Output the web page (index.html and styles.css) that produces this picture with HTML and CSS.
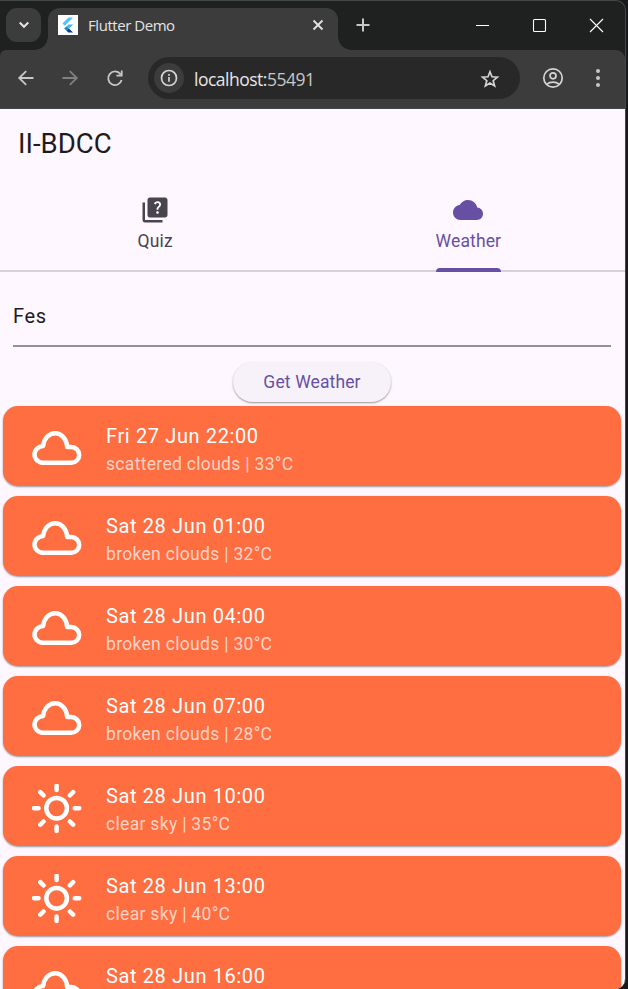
FILE: index.html
```html
<!DOCTYPE html>
<html lang="en">
<head>
<meta charset="utf-8">
<title>Flutter Demo</title>
<link rel="stylesheet" href="styles.css">
</head>
<body>
<svg class="defs" width="0" height="0" aria-hidden="true">
  <symbol id="cloud" viewBox="0 0 50 50"><path d="M11.500 38.800H39.300a7.900 7.900 0 0 0 0-15.800H35.200C34.700 15.200 29.700 9.200 23.300 9.200S11.900 14.600 11.200 21.900C6.400 22.200 2.500 26.100 2.500 30.500S6.400 38.800 11.500 38.800Z"/></symbol>
  <symbol id="sun" viewBox="0 0 50 50"><circle cx="24.600" cy="24.200" r="10.300"/><path d="M24.600 1.500v4.600M24.600 42.500v4.600M1.900 24.200h4.600M42.700 24.200h4.600M8.300 8.200l3.200 3.200M37.900 37.500l3.200 3.200M8.300 40.700l3.200-3.200M37.900 11.400l3.200-3.200"/></symbol>
</svg>
<div class="window">
  <div class="tabstrip">
    <button class="tab-search"><svg width="18" height="18" viewBox="0 0 18 18"><path d="m4.700 6.500 4.300 4.300 4.300-4.300"/></svg></button>
    <div class="browser-tab">
      <svg class="favicon" width="20" height="20" viewBox="0 0 20 20"><path fill="#fff" d="M0 0h20v20H0z"/><path fill="#54c5f8" d="M10.500 2.500h4.700L6.800 10.800 4.500 8.500z"/><path fill="#42b8f3" d="M10.600 9.500h4.600l-4.100 4-2.400-2.300z"/><path fill="#168bd0" d="m8.500 11.200 2.400 2.300-2.400 2.200L6.200 13.500z"/><path fill="#07418b" d="m8.500 15.700 2.400-2.200 4.200 4h-4.700z"/></svg>
      <span class="tab-title">Flutter Demo</span>
      <svg class="tab-close" width="14" height="14" viewBox="0 0 14 14"><path d="m2.500 2.500 9 9m0-9-9 9"/></svg>
    </div>
    <svg class="new-tab" width="16" height="16" viewBox="0 0 16 16"><path d="M8 1.500v13M1.500 8h13"/></svg>
    <div class="window-controls">
      <svg width="15" height="15" viewBox="0 0 15 15"><path d="M1 7.500h13"/></svg>
      <svg width="15" height="15" viewBox="0 0 15 15"><rect x="1.500" y="1.500" width="12" height="12" rx="1"/></svg>
      <svg width="15" height="15" viewBox="0 0 15 15"><path d="m1 1 13 13M14 1 1 14"/></svg>
    </div>
  </div>
  <div class="toolbar">
    <svg class="nav" width="20" height="20" viewBox="0 0 20 20"><path d="M17.500 10H3.200m7-6.800L3.200 10l7 6.800"/></svg>
    <svg class="nav disabled" width="20" height="20" viewBox="0 0 20 20"><path d="M2.500 10h14.300m-7-6.800 7 6.800-7 6.800"/></svg>
    <svg class="nav" width="20" height="20" viewBox="0 0 20 20"><path d="M15.500 6.200A6.800 6.800 0 1 0 16.600 12M16.700 2.500v5.200h-5.300"/></svg>
    <div class="address">
      <span class="site-info"><svg width="18" height="18" viewBox="0 0 18 18"><circle cx="9" cy="9" r="7.500"/><path d="M9 8v4.800M9 5v1.800"/></svg></span>
      <span class="url">localhost:<span class="port">55491</span></span>
      <svg class="star" width="20" height="20" viewBox="0 0 20 20"><path d="m10 2.800 2 5 5.400.4-4.200 3.500 1.400 5.200-4.600-2.900-4.600 2.900 1.400-5.200-4.200-3.500 5.400-.4z"/></svg>
    </div>
    <svg class="profile" width="22" height="22" viewBox="0 0 22 22"><circle cx="11" cy="11" r="9.200"/><circle cx="11" cy="8.800" r="3"/><path d="M4.700 17.300c3.500-3 9.100-3 12.600 0"/></svg>
    <svg class="more" width="6" height="20" viewBox="0 0 6 20"><circle cx="3" cy="3" r="2"/><circle cx="3" cy="10" r="2"/><circle cx="3" cy="17" r="2"/></svg>
  </div>
  <main class="app">
    <h1>II-BDCC</h1>
    <nav class="tabs">
      <div class="tab"><svg width="30" height="30" viewBox="0 0 24 24"><path d="M4 6H2v14c0 1.100.9 2 2 2h14v-2H4zM20 2H8c-1.100 0-2 .9-2 2v12c0 1.100.9 2 2 2h12c1.100 0 2-.9 2-2V4c0-1.100-.9-2-2-2zm-5.990 13c-.59 0-1.050-.47-1.050-1.050 0-.59.47-1.040 1.050-1.040.59 0 1.040.45 1.040 1.040-.01.58-.45 1.050-1.040 1.050zm2.500-6.170c-.63.930-1.230 1.210-1.560 1.810-.13.240-.18.400-.18 1.180h-1.520c0-.41-.06-1.080.26-1.650.41-.73 1.180-1.160 1.630-1.800.48-.68.210-1.940-1.140-1.940-.88 0-1.320.67-1.500 1.230l-1.370-.57C11.510 5.960 12.520 5 13.990 5c1.230 0 2.080.56 2.510 1.260.37.610.58 1.730.01 2.570z"/></svg><span>Quiz</span></div>
      <div class="tab active"><svg width="30" height="30" viewBox="0 0 24 24"><path d="M19.350 10.040C18.670 6.590 15.640 4 12 4 9.110 4 6.600 5.640 5.350 8.040 2.340 8.360 0 10.910 0 14c0 3.310 2.690 6 6 6h13c2.760 0 5-2.240 5-5 0-2.640-2.050-4.780-4.650-4.960z"/></svg><span>Weather</span></div>
    </nav>
    <div class="city">Fes</div>
    <button class="submit">Get Weather</button>
    <div class="forecast">
      <article class="card"><svg><use href="#cloud"/></svg><div><h2>Fri 27 Jun 22:00</h2><p>scattered clouds | 33°C</p></div></article>
      <article class="card"><svg><use href="#cloud"/></svg><div><h2>Sat 28 Jun 01:00</h2><p>broken clouds | 32°C</p></div></article>
      <article class="card"><svg><use href="#cloud"/></svg><div><h2>Sat 28 Jun 04:00</h2><p>broken clouds | 30°C</p></div></article>
      <article class="card"><svg><use href="#cloud"/></svg><div><h2>Sat 28 Jun 07:00</h2><p>broken clouds | 28°C</p></div></article>
      <article class="card"><svg><use href="#sun"/></svg><div><h2>Sat 28 Jun 10:00</h2><p>clear sky | 35°C</p></div></article>
      <article class="card"><svg><use href="#sun"/></svg><div><h2>Sat 28 Jun 13:00</h2><p>clear sky | 40°C</p></div></article>
      <article class="card"><svg><use href="#cloud"/></svg><div><h2>Sat 28 Jun 16:00</h2></div></article>
    </div>
  </main>
</div>
</body>
</html>
```
FILE: styles.css
```css
* { box-sizing: border-box; }
html, body { height: 100%; }
body { margin: 0; background: #17191b; overflow: hidden; font-family: Roboto, sans-serif; }
svg { display: block; flex: none; }
.defs { position: absolute; }
button { border: 0; padding: 0; font: inherit; }
h1, h2, p { margin: 0; font-weight: 400; }
.window { width: 626px; height: 989px; display: flex; flex-direction: column; background: #1f2120; border-top: 1px solid #454746; border-right: 1px solid #454746; border-radius: 0 10px 10px 0; overflow: hidden; }
.tabstrip { height: 49px; flex: none; display: flex; align-items: flex-start; padding: 7px 21px 0 6px; }
.tab-search { width: 35px; height: 34px; margin-right: 7px; border-radius: 11px; background: #3c3c3c; display: flex; align-items: center; justify-content: center; }
.tab-search svg { fill: none; stroke: #e3e3e3; stroke-width: 2; }
.browser-tab { position: relative; width: 290px; height: 42px; padding: 0 13px 9px 10px; border-radius: 12px 12px 0 0; background: #3c3c3c; display: flex; align-items: center; }
.browser-tab::before, .browser-tab::after { content: ""; position: absolute; bottom: 0; width: 13px; height: 13px; }
.browser-tab::before { right: 100%; background: radial-gradient(circle at 0 0, transparent 12.5px, #3c3c3c 13px); }
.browser-tab::after { left: 100%; background: radial-gradient(circle at 100% 0, transparent 12.5px, #3c3c3c 13px); }
.tab-title { margin-left: 10px; font: 15px/20px "Open Sans", sans-serif; letter-spacing: -.45px; color: #e3e3e3; }
.tab-close { margin-left: auto; fill: none; stroke: #e3e3e3; stroke-width: 1.8; }
.new-tab { margin: 9px 0 0 17px; fill: none; stroke: #c7c7c7; stroke-width: 2; }
.window-controls { margin: 10px 0 0 auto; display: flex; gap: 42px; fill: none; stroke: #fff; stroke-width: 1.1; }
.toolbar { height: 59px; flex: none; padding: 0 24px 2px 16px; background: #3c3c3c; border-bottom: 1px solid #454746; border-radius: 6px 9px 0 0; display: flex; align-items: center; }
.nav { margin-right: 25px; fill: none; stroke: #c7c7c7; stroke-width: 1.8; }
.nav.disabled { margin-left: -1px; stroke: #808080; }
.address { width: 372px; height: 42px; margin-left: -2px; padding: 0 20px 0 6px; border-radius: 21px; background: #282828; display: flex; align-items: center; }
.site-info { width: 30px; height: 30px; border-radius: 50%; background: #3c3c3c; display: flex; align-items: center; justify-content: center; }
.site-info svg, .star, .profile { fill: none; stroke: #d5d5d5; stroke-width: 1.7; }
.url { margin: 2px 0 0 10px; font: 17.5px/24px "Open Sans", sans-serif; letter-spacing: -.5px; color: #e6e6e6; }
.port { color: #c7c7c7; }
.star { margin: 2px 0 0 auto; }
.profile { margin-left: 22px; }
.more { margin-left: auto; fill: #c7c7c7; }
.app { flex: 1; min-height: 0; background: #fef7ff; color: #1d1b20; overflow: hidden; display: flex; flex-direction: column; }
h1 { flex: none; height: 70px; padding-left: 18px; font-size: 27.5px; line-height: 70px; }
.tabs { flex: none; height: 93px; display: flex; box-shadow: inset 0 -2px #d8d1dd; }
.tab { flex: 1 1 0; min-width: 0; display: flex; flex-direction: column; align-items: center; padding: 16px 3px 0 0; color: #49454f; fill: currentColor; font-size: 17.5px; line-height: 25px; letter-spacing: .125px; }
.tab span { margin-top: 4px; }
.tab.active { padding-right: 1.5px; color: #6750a4; }
.tab.active span::after { content: ""; display: block; height: 4px; margin-top: 13.600px; border-radius: 4px 4px 0 0; background: #6750a4; }
.city { flex: none; height: 75px; margin: 0 14px 0 13px; padding-top: 29px; border-bottom: 2px solid #938e98; font-size: 20px; line-height: 30px; letter-spacing: .625px; }
.submit { flex: none; align-self: center; width: 158px; height: 40px; margin: 15px 1px 0 0; border-radius: 20px; background: #f7f2fa; box-shadow: 0 1px 2px #0006; color: #6750a4; font-size: 17.5px; line-height: 40px; letter-spacing: .125px; }
.forecast { flex: none; padding: 4.400px 4px 0 3px; display: flex; flex-direction: column; gap: 10px; }
.card { flex: none; height: 80px; padding: 0 29px; border-radius: 15px; background: #ff6e40; box-shadow: 0 1px 2px #0006; display: flex; }
.card svg { width: 50px; height: 50px; margin: 17.400px 24px 0 0; fill: none; stroke: #fff; stroke-width: 4.500; stroke-linecap: round; stroke-linejoin: round; }
.card h2 { margin-top: 14.600px; color: #fff; font-size: 20px; line-height: 30px; letter-spacing: .625px; }
.card p { margin-top: 1px; color: #ffffffb3; font-size: 17.5px; line-height: 25px; letter-spacing: .3125px; }
```
